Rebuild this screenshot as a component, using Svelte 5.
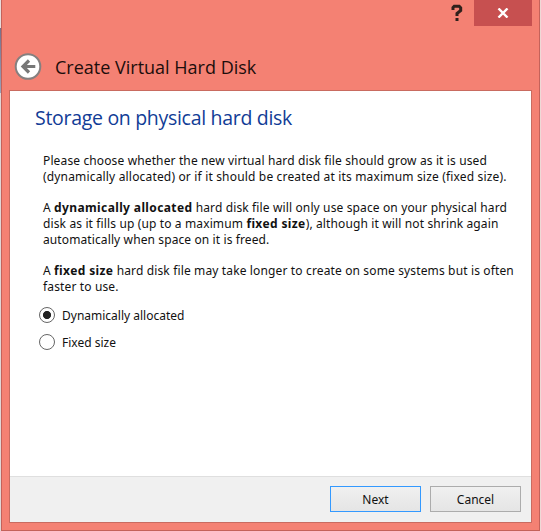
<script lang="ts">
	type Part = { text: string; bold?: boolean };
	type Line = { spacing: number; parts: Part[] };

	const paragraphs: Line[][] = [
		[
			{ spacing: 0.13, parts: [{ text: 'Please choose whether the new virtual hard disk file should grow as it is used' }] },
			{ spacing: 0.17, parts: [{ text: '(dynamically allocated) or if it should be created at its maximum size (fixed size).' }] }
		],
		[
			{
				spacing: 0.13,
				parts: [
					{ text: 'A ' },
					{ text: 'dynamically allocated', bold: true },
					{ text: ' hard disk file will only use space on your physical hard' }
				]
			},
			{
				spacing: 0.13,
				parts: [
					{ text: 'disk as it fills up (up to a maximum ' },
					{ text: 'fixed size', bold: true },
					{ text: '), although it will not shrink again' }
				]
			},
			{ spacing: 0.11, parts: [{ text: 'automatically when space on it is freed.' }] }
		],
		[
			{
				spacing: 0.14,
				parts: [
					{ text: 'A ' },
					{ text: 'fixed size', bold: true },
					{ text: ' hard disk file may take longer to create on some systems but is often' }
				]
			},
			{ spacing: 0.14, parts: [{ text: 'faster to use.' }] }
		]
	];

	const options = ['Dynamically allocated', 'Fixed size'];
	let selected = $state('Dynamically allocated');
</script>

<div class="screen">
	<div class="window">
		<header>
			<div class="controls">
				<button class="help" aria-label="Help">
					<svg width="12" height="18" viewBox="0 0 12 18">
						<path d="M2 6V3.5L3.2 2.3h5L9.7 3.8v2.7L6 9.5V12M6 14v3" fill="none" stroke="#30211c" stroke-width="3" />
					</svg>
				</button>
				<button class="close" aria-label="Close">
					<svg width="12" height="10" viewBox="0 0 12 10">
						<path d="M1.5 .5l9 9M10.5 .5l-9 9" fill="none" stroke="#fff" stroke-width="2.4" />
					</svg>
				</button>
			</div>
			<div class="title">
				<button class="back" aria-label="Back">
					<svg width="28" height="28" viewBox="0 0 28 28">
						<circle cx="14" cy="13.5" r="12.3" fill="#fff" stroke="#858080" stroke-width="2" />
						<path d="M21.3 13.5H9M15 7.5l-6 6 6 6" fill="none" stroke="#777" stroke-width="3.2" />
					</svg>
				</button>
				<span>Create Virtual Hard Disk</span>
			</div>
		</header>
		<div class="panel">
			<main>
				<h1>Storage on physical hard disk</h1>
				{#each paragraphs as lines}
					<p>
						{#each lines as line}
							<span class="line" style="letter-spacing: {line.spacing}px">{#each line.parts as part}{#if part.bold}<b>{part.text}</b>{:else}{part.text}{/if}{/each}</span>
						{/each}
					</p>
				{/each}
				<div class="options">
					{#each options as option}
						<label>
							<input type="radio" name="storage" value={option} bind:group={selected} />
							<span>{option}</span>
						</label>
					{/each}
				</div>
			</main>
			<footer>
				<button class="next">Next</button>
				<button>Cancel</button>
			</footer>
		</div>
	</div>
</div>

<style>
	:global(body) {
		margin: 0;
		overflow: hidden;
	}
	.screen {
		box-sizing: border-box;
		width: 541px;
		height: 531px;
		padding-left: 1px;
		border-right: 1px solid #eed9d6;
		background: linear-gradient(#e8dcdc 28px, #77708a 28px, #9ba1b8 93px, #e0d6d6 93px);
		font-family: 'Noto Sans', sans-serif;
		font-size: 12px;
		color: #111;
	}
	.window {
		box-sizing: border-box;
		height: 531px;
		border: 1px solid #c4625a;
		border-top: 0;
		background: #f48173;
		display: flex;
		flex-direction: column;
		padding: 0 7px 7px;
	}
	button {
		padding: 0;
		font: inherit;
		color: inherit;
	}
	header {
		height: 90px;
		flex: none;
	}
	.controls {
		display: flex;
		justify-content: flex-end;
		height: 26px;
	}
	.controls button,
	.back {
		border: 0;
		background: none;
		display: flex;
		align-items: center;
		justify-content: center;
	}
	.controls .help {
		width: 34px;
	}
	.controls .close {
		width: 58px;
		background: #c75050;
	}
	.title {
		display: flex;
		align-items: center;
		height: 28px;
		margin-top: 27px;
		padding-left: 5px;
		font-family: 'Open Sans', sans-serif;
		font-size: 18px;
		color: #1c0e0c;
	}
	.title span {
		margin-left: 13px;
		white-space: nowrap;
	}
	.panel {
		flex: 1;
		display: flex;
		flex-direction: column;
		border: 1px solid #c96b60;
		background: #fff;
	}
	main {
		flex: 1;
		padding: 13px 0 0 33px;
	}
	h1 {
		margin: 0 0 21px -8px;
		font: 400 19.5px/28px 'Open Sans', sans-serif;
		letter-spacing: -0.3px;
		color: #113c96;
		white-space: nowrap;
	}
	p {
		margin: 0 0 15px;
	}
	.line {
		display: block;
		line-height: 16px;
		white-space: nowrap;
	}
	b {
		letter-spacing: 0.38px;
	}
	.options {
		display: flex;
		flex-direction: column;
		gap: 11px;
		margin: -3px 0 0 -4px;
	}
	label {
		display: flex;
		align-items: center;
		gap: 7px;
		height: 16px;
	}
	input {
		appearance: none;
		box-sizing: border-box;
		width: 16px;
		height: 16px;
		margin: 0;
		border: 1px solid #666;
		border-radius: 50%;
		background: #fff;
	}
	input:checked {
		background: radial-gradient(circle, #222 3.7px, #fff 4.4px);
	}
	footer {
		box-sizing: border-box;
		height: 46px;
		display: flex;
		justify-content: flex-end;
		gap: 9px;
		padding: 9px 10px 0 0;
		border-top: 1px solid #dfdfdf;
		background: #f0f0f0;
	}
	footer button {
		box-sizing: border-box;
		width: 91px;
		height: 26px;
		border: 1px solid #acacac;
		background: linear-gradient(#f0f0f0, #e5e5e5);
	}
	footer .next {
		border-color: #3399ff;
	}
</style>
